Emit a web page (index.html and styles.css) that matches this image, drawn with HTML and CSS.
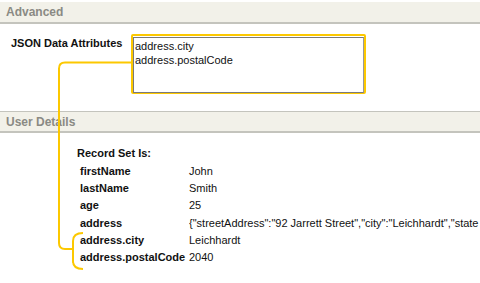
FILE: index.html
```html
<!DOCTYPE html>
<html lang="en">

<head>
    <meta charset="UTF-8">
    <title>JSON Data Attributes</title>
    <link rel="stylesheet" href="styles.css">
</head>

<body>
    <div class="page">
        <div class="section-head">Advanced</div>
        <div class="field-row">
            <label class="field-label" for="attrs">JSON Data Attributes</label>
            <div class="highlight">
                <textarea id="attrs" class="attrs">address.city
address.postalCode</textarea>
            </div>
        </div>

        <div class="section-head">User Details</div>
        <div class="record">
            <div class="record-title">Record Set Is:</div>
            <table class="record-table">
                <tr>
                    <td class="key">firstName</td>
                    <td>John</td>
                </tr>
                <tr>
                    <td class="key">lastName</td>
                    <td>Smith</td>
                </tr>
                <tr>
                    <td class="key">age</td>
                    <td>25</td>
                </tr>
                <tr>
                    <td class="key">address</td>
                    <td class="json">{"streetAddress":"92 Jarrett Street","city":"Leichhardt","state</td>
                </tr>
                <tr>
                    <td class="key">address.city</td>
                    <td>Leichhardt</td>
                </tr>
                <tr>
                    <td class="key">address.postalCode</td>
                    <td>2040</td>
                </tr>
            </table>
        </div>

        <!-- callout linking the attribute list to the rows it produced -->
        <svg class="callout" width="480" height="283" viewBox="0 0 480 283">
            <path d="M131 62.5 H65 Q59 62.5 59 68.5 V243 Q59 249 65 249 H73" />
            <path d="M83 233 Q73 233 73 241 V261 Q73 269 83 269" />
        </svg>
    </div>
</body>

</html>
```

FILE: styles.css
```css
* {
    padding: 0;
    margin: 0;
    box-sizing: border-box;
    font-family: "Liberation Sans", Arial, sans-serif;
}

body {
    background-color: #fff;
    color: #111;
    font-size: 11px;
}

.page {
    position: relative;
    width: 480px;
    height: 283px;
    overflow: hidden;
    padding-top: 2px;
}

.section-head {
    height: 22px;
    line-height: 21px;
    padding-left: 6px;
    background-color: #f2f1e9;
    border-bottom: 2px solid #c4c4bd;
    color: #8a8a84;
    font-weight: bold;
    font-size: 12px;
}

.section-head:nth-of-type(3) {
    border-top: 1px solid #c4c4bd;
}

.field-row {
    display: flex;
    padding: 10px 0 16px 11px;
    height: 87px;
}

.field-label {
    width: 120px;
    font-weight: bold;
    padding-top: 3px;
}

.highlight {
    width: 235px;
    height: 60px;
    border: 2px solid #fcc800;
    border-radius: 2px;
    padding: 1px 1px 0 0;
}

.attrs {
    display: block;
    width: 231px;
    height: 56px;
    border: 1px solid #7a7a7a;
    border-right-color: #999;
    padding: 1px 1px;
    font-size: 11px;
    line-height: 14px;
    color: #111;
    resize: none;
    overflow: hidden;
}

.record {
    padding: 14px 0 0 77px;
}

.record-title {
    font-weight: bold;
    height: 15px;
}

.record-table {
    table-layout: fixed;
    width: 400px;
    border-collapse: collapse;
    margin-left: 3px;
}

.record-table td {
    height: 17.3px;
    padding: 0;
    vertical-align: middle;
    white-space: nowrap;
}

.record-table .key {
    width: 109px;
    font-weight: bold;
}

.record-table .json {
    overflow: hidden;
}

.callout {
    position: absolute;
    left: 0;
    top: 0;
    pointer-events: none;
}

.callout path {
    fill: none;
    stroke: #fcc800;
    stroke-width: 2;
}
```
